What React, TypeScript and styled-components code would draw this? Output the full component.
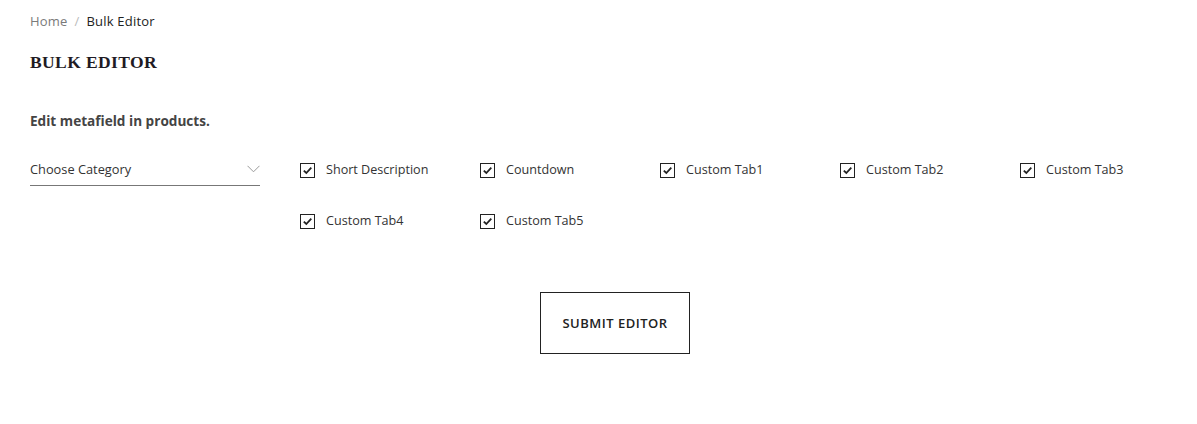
import React from "react";
import styled, { createGlobalStyle } from "styled-components";

const Global = createGlobalStyle`
  html, body { margin: 0; padding: 0; background: #fff; }
  body { font-family: "Open Sans", "Liberation Sans", sans-serif; color: #333; }
`;

const Page = styled.div`
  padding: 12px 0 0 30px;
  width: 1197px;
  box-sizing: border-box;
`;

const Crumbs = styled.nav`
  display: flex;
  align-items: center;
  gap: 7px;
  font-size: 13px;
  line-height: 18px;
  letter-spacing: 0.2px;
`;

const Crumb = styled.span<{ $current?: boolean }>`
  color: ${(p) => (p.$current ? "#222" : "#7a7a7a")};
`;

const Sep = styled.span`
  color: #bbb;
`;

const Title = styled.h1`
  margin: 21px 0 0;
  font-family: "Liberation Serif", "DejaVu Serif", serif;
  font-weight: 700;
  font-size: 17.5px;
  line-height: 22px;
  letter-spacing: 0.4px;
  color: #1f1b24;
`;

const Lead = styled.p`
  margin: 38px 0 0;
  font-size: 13.6px;
  font-weight: 700;
  line-height: 20px;
  color: #444;
`;

const Form = styled.div`
  display: flex;
  align-items: flex-start;
  gap: 40px;
  margin-top: 26px;
`;

const Select = styled.div`
  flex: 0 0 230px;
  height: 29px;
  box-sizing: border-box;
  border-bottom: 1px solid #777;
  display: flex;
  align-items: center;
  justify-content: space-between;
  padding-bottom: 4px;
  font-size: 12.8px;
  color: #333;
`;

const Grid = styled.div`
  display: grid;
  grid-template-columns: repeat(4, 180px) auto;
  row-gap: 33px;
  padding-top: 4px;
`;

const Item = styled.label`
  display: flex;
  align-items: center;
  gap: 11px;
  font-size: 12.6px;
  line-height: 18px;
  color: #333;
`;

const Box = styled.span`
  width: 15px;
  height: 15px;
  box-sizing: border-box;
  border: 1px solid #222;
  display: flex;
  align-items: center;
  justify-content: center;
`;

const Actions = styled.div`
  display: flex;
  justify-content: center;
  padding-left: 3px;
  margin-top: 62px;
`;

const Button = styled.button`
  width: 150px;
  height: 62px;
  background: #fff;
  border: 1px solid #222;
  font-family: "Open Sans", "Liberation Sans", sans-serif;
  font-size: 13px;
  font-weight: 600;
  letter-spacing: 0.5px;
  color: #222;
`;

const Check = () => (
  <Box>
    <svg width="11" height="11" viewBox="0 0 11 11">
      <path d="M1.8 5.6 L4.3 8 L9.3 2.6" fill="none" stroke="#222" strokeWidth="1.8" />
    </svg>
  </Box>
);

const items = [
  "Short Description",
  "Countdown",
  "Custom Tab1",
  "Custom Tab2",
  "Custom Tab3",
  "Custom Tab4",
  "Custom Tab5",
];

export default function App() {
  return (
    <Page>
      <Global />
      <Crumbs>
        <Crumb>Home</Crumb>
        <Sep>/</Sep>
        <Crumb $current>Bulk Editor</Crumb>
      </Crumbs>
      <Title>BULK EDITOR</Title>
      <Lead>Edit metafield in products.</Lead>
      <Form>
        <Select>
          <span>Choose Category</span>
          <svg width="13" height="8" viewBox="0 0 13 8">
            <path d="M0.5 0.8 L6.5 6.8 L12.5 0.8" fill="none" stroke="#999" strokeWidth="1" />
          </svg>
        </Select>
        <Grid>
          {items.map((t) => (
            <Item key={t}>
              <Check />
              <span>{t}</span>
            </Item>
          ))}
        </Grid>
      </Form>
      <Actions>
        <Button>SUBMIT EDITOR</Button>
      </Actions>
    </Page>
  );
}
